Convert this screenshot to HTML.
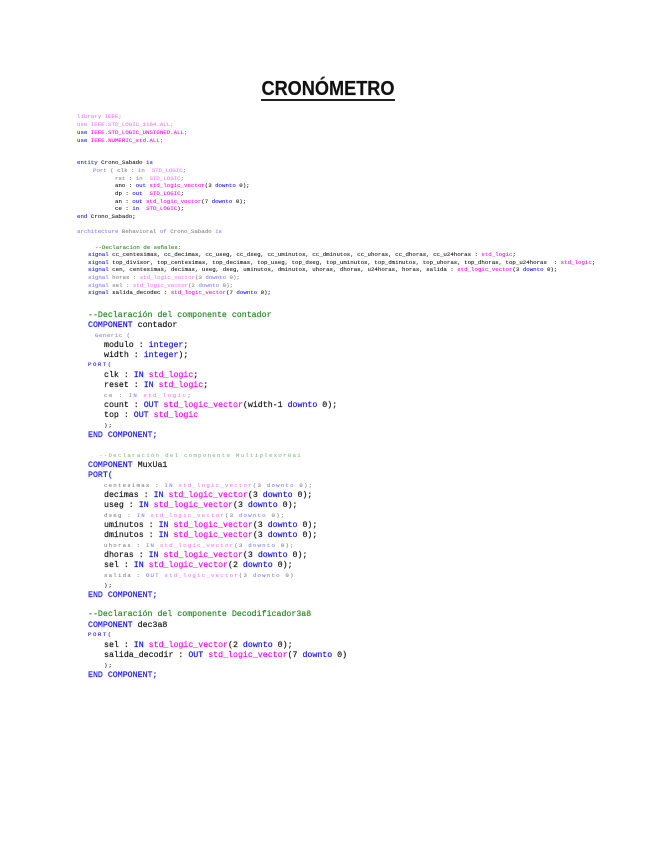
<!DOCTYPE html>
<html lang="es">
<head>
<meta charset="utf-8">
<title>Cronómetro</title>
<style>
html,body{margin:0;padding:0;background:#fff}
body{width:655px;height:848px;position:relative;overflow:hidden}
#t{position:absolute;left:228px;top:76px;width:200px;text-align:center;font:bold 20.5px/26px "Liberation Sans",sans-serif;color:#111;transform:scaleX(.885);white-space:nowrap;filter:blur(.25px);-webkit-text-stroke:.2px #111}
#u{position:absolute;left:261px;top:99px;width:134px;height:2.4px;background:#222;filter:blur(.25px)}
#code{filter:blur(.3px)}
pre{position:absolute;margin:0;font-family:"Liberation Mono",monospace;white-space:pre;color:#111}
.s{font-size:5.75px;line-height:8px;-webkit-text-stroke:.08px currentColor}
.b{font-size:8.28px;line-height:10px;-webkit-text-stroke:.16px currentColor}
.l{opacity:.55}
.w{letter-spacing:1.2px}
.k{color:#11f}
.m{color:#f0f}
.g{color:#282}
</style>
</head>
<body>
<div id="t">CRONÓMETRO</div>
<div id="u"></div>
<div id="code">
<pre class="s l m" style="left:77px;top:113px">library IEEE;</pre>
<pre class="s l m" style="left:77px;top:121px">use IEEE.STD_LOGIC_1164.ALL;</pre>
<pre class="s m" style="left:77px;top:129px"><span class="k">use</span> IEEE.STD_LOGIC_UNSIGNED.ALL;</pre>
<pre class="s m" style="left:77px;top:137px"><span class="k">use</span> IEEE.NUMERIC_std.ALL;</pre>

<pre class="s" style="left:77px;top:159px"><span class="k">entity</span> Crono_Sabado <span class="k">is</span></pre>
<pre class="s l" style="left:93px;top:167px"><span class="k">Port</span> ( clk : <span class="k">in</span>  <span class="m">STD_LOGIC</span>;</pre>
<pre class="s l" style="left:115px;top:175px">rst : <span class="k">in</span>  <span class="m">STD_LOGIC</span>;</pre>
<pre class="s" style="left:115px;top:182px">ano : <span class="k">out</span> <span class="m">std_logic_vector</span>(3 <span class="k">downto</span> 0);</pre>
<pre class="s" style="left:115px;top:190px">dp : <span class="k">out</span>  <span class="m">STD_LOGIC</span>;</pre>
<pre class="s" style="left:115px;top:198px">an : <span class="k">out</span> <span class="m">std_logic_vector</span>(7 <span class="k">downto</span> 0);</pre>
<pre class="s" style="left:115px;top:205px">ce : <span class="k">in</span>  <span class="m">STD_LOGIC</span>);</pre>
<pre class="s" style="left:77px;top:213px"><span class="k">end</span> Crono_Sabado;</pre>

<pre class="s l" style="left:77px;top:228px"><span class="k">architecture</span> Behavioral <span class="k">of</span> Crono_Sabado <span class="k">is</span></pre>

<pre class="s g" style="left:95px;top:244px">--Declaracion de señales:</pre>
<pre class="s" style="left:88px;top:251px"><span class="k">signal</span> cc_centesimas, cc_decimas, cc_useg, cc_dseg, cc_uminutos, cc_dminutos, cc_uhoras, cc_dhoras, cc_u24horas : <span class="m">std_logic</span>;</pre>
<pre class="s" style="left:88px;top:259px"><span class="k">signal</span> top_divisor, top_centesimas, top_decimas, top_useg, top_dseg, top_uminutos, top_dminutos, top_uhoras, top_dhoras, top_u24horas  : <span class="m">std_logic</span>;</pre>
<pre class="s" style="left:88px;top:266px"><span class="k">signal</span> cen, centesimas, decimas, useg, dseg, uminutos, dminutos, uhoras, dhoras, u24horas, horas, salida : <span class="m">std_logic_vector</span>(3 <span class="k">downto</span> 0);</pre>
<pre class="s l" style="left:88px;top:274px"><span class="k">signal</span> horas : <span class="m">std_logic_vector</span>(3 <span class="k">downto</span> 0);</pre>
<pre class="s l" style="left:88px;top:282px"><span class="k">signal</span> sel : <span class="m">std_logic_vector</span>(2 <span class="k">downto</span> 0);</pre>
<pre class="s" style="left:88px;top:289px"><span class="k">signal</span> salida_decodec : <span class="m">std_logic_vector</span>(7 <span class="k">downto</span> 0);</pre>

<pre class="b g" style="left:88px;top:311px">--Declaración del componente contador</pre>
<pre class="b" style="left:88px;top:321px"><span class="k">COMPONENT</span> contador</pre>
<pre class="s l" style="left:95px;top:332px;letter-spacing:.5px"><span class="k">Generic</span> (</pre>
<pre class="b" style="left:104px;top:341px">modulo : <span class="k">integer</span>;</pre>
<pre class="b" style="left:104px;top:351px">width : <span class="k">integer</span>);</pre>
<pre class="s k" style="left:88px;top:361px;letter-spacing:1.5px">PORT(</pre>
<pre class="b" style="left:104px;top:371px">clk : <span class="k">IN</span> <span class="m">std_logic</span>;</pre>
<pre class="b" style="left:104px;top:381px">reset : <span class="k">IN</span> <span class="m">std_logic</span>;</pre>
<pre class="s l" style="left:104px;top:392px;letter-spacing:1.45px">ce : <span class="k">IN</span> <span class="m">std_logic</span>;</pre>
<pre class="b" style="left:104px;top:401px">count : <span class="k">OUT</span> <span class="m">std_logic_vector</span>(width-1 <span class="k">downto</span> 0);</pre>
<pre class="b" style="left:104px;top:411px">top : <span class="k">OUT</span> <span class="m">std_logic</span></pre>
<pre class="s" style="left:104px;top:422px;letter-spacing:1px">);</pre>
<pre class="b k" style="left:88px;top:431px">END COMPONENT;</pre>

<pre class="s g l w" style="left:99px;top:452px;letter-spacing:1.27px">--Declaración del componente Multiplexor8a1</pre>
<pre class="b" style="left:88px;top:461px"><span class="k">COMPONENT</span> MuxUa1</pre>
<pre class="b k" style="left:88px;top:471px">PORT(</pre>
<pre class="s l w" style="left:104px;top:482px">centesimas : <span class="k">IN</span> <span class="m">std_logic_vector</span>(3 <span class="k">downto</span> 0);</pre>
<pre class="b" style="left:104px;top:491px">decimas : <span class="k">IN</span> <span class="m">std_logic_vector</span>(3 <span class="k">downto</span> 0);</pre>
<pre class="b" style="left:104px;top:501px">useg : <span class="k">IN</span> <span class="m">std_logic_vector</span>(3 <span class="k">downto</span> 0);</pre>
<pre class="s l w" style="left:104px;top:512px">dseg : <span class="k">IN</span> <span class="m">std_logic_vector</span>(3 <span class="k">downto</span> 0);</pre>
<pre class="b" style="left:104px;top:521px">uminutos : <span class="k">IN</span> <span class="m">std_logic_vector</span>(3 <span class="k">downto</span> 0);</pre>
<pre class="b" style="left:104px;top:531px">dminutos : <span class="k">IN</span> <span class="m">std_logic_vector</span>(3 <span class="k">downto</span> 0);</pre>
<pre class="s l w" style="left:104px;top:542px">uhoras : <span class="k">IN</span> <span class="m">std_logic_vector</span>(3 <span class="k">downto</span> 0);</pre>
<pre class="b" style="left:104px;top:551px">dhoras : <span class="k">IN</span> <span class="m">std_logic_vector</span>(3 <span class="k">downto</span> 0);</pre>
<pre class="b" style="left:104px;top:561px">sel : <span class="k">IN</span> <span class="m">std_logic_vector</span>(2 <span class="k">downto</span> 0);</pre>
<pre class="s l w" style="left:104px;top:572px">salida : <span class="k">OUT</span> <span class="m">std_logic_vector</span>(3 <span class="k">downto</span> 0)</pre>
<pre class="s" style="left:104px;top:582px;letter-spacing:1px">);</pre>
<pre class="b k" style="left:88px;top:591px">END COMPONENT;</pre>

<pre class="b g" style="left:88px;top:610px">--Declaración del componente Decodificador3a8</pre>
<pre class="b" style="left:88px;top:621px"><span class="k">COMPONENT</span> dec3a8</pre>
<pre class="s k" style="left:88px;top:631px;letter-spacing:1.5px">PORT(</pre>
<pre class="b" style="left:104px;top:641px">sel : <span class="k">IN</span> <span class="m">std_logic_vector</span>(2 <span class="k">downto</span> 0);</pre>
<pre class="b" style="left:104px;top:651px">salida_decodir : <span class="k">OUT</span> <span class="m">std_logic_vector</span>(7 <span class="k">downto</span> 0)</pre>
<pre class="s" style="left:104px;top:662px;letter-spacing:1px">);</pre>
<pre class="b k" style="left:88px;top:671px">END COMPONENT;</pre>
</div>
</body>
</html>
